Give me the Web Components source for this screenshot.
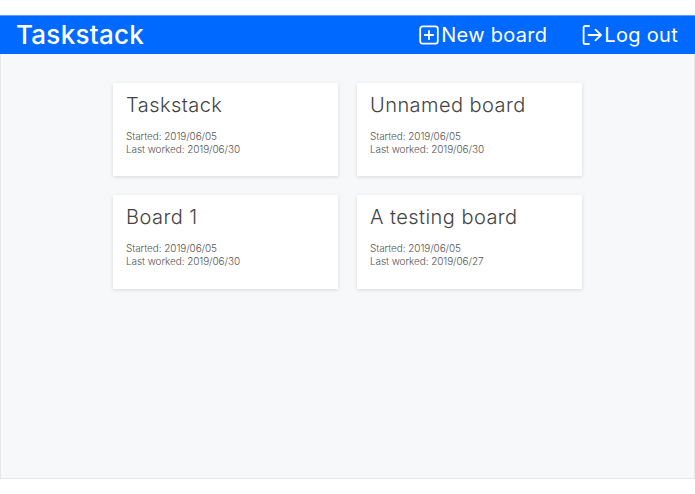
<!DOCTYPE html>
<html><head><meta charset="utf-8"><style>
html,body{margin:0;padding:0;background:#fff}
body{font-family:Inter,"Liberation Sans",sans-serif}
</style></head><body>
<app-frame>
<app-header slot="header"></app-header>
<board-grid>
<board-card name="Taskstack" started="2019/06/05" worked="2019/06/30"></board-card>
<board-card name="Unnamed board" started="2019/06/05" worked="2019/06/30"></board-card>
<board-card name="Board 1" started="2019/06/05" worked="2019/06/30"></board-card>
<board-card name="A testing board" started="2019/06/05" worked="2019/06/27"></board-card>
</board-grid>
</app-frame>
<script>
function def(name,html,init){customElements.define(name,class extends HTMLElement{
 constructor(){super();this.attachShadow({mode:'open'}).innerHTML=html;}
 connectedCallback(){if(init)init(this);}
});}
def('app-frame',`<style>
:host{display:flex;flex-direction:column;box-sizing:border-box;height:479px;padding-top:15px}
main{flex:1;background:#f6f8fa;border:1px solid #e6e8ea;border-top:0;box-sizing:border-box;padding-top:29px}
</style><slot name="header"></slot><main><slot></slot></main>`);
def('app-header',`<style>
:host{display:flex;align-items:center;justify-content:space-between;height:39px;background:#0069ff;color:#fff;padding:0 17px 0 16px;box-sizing:border-box;border-top:1px solid #5a9dff}
h1{margin:0;font:500 26px/1 Inter,sans-serif;letter-spacing:.27px}
nav{display:flex;gap:35px}
a{display:flex;align-items:center;gap:2px;font:400 20px/1 Inter,sans-serif;letter-spacing:.3px}
svg{width:20px;height:20px;fill:none;stroke:#fff;stroke-width:1.8;stroke-linecap:round;stroke-linejoin:round}
</style><h1>Taskstack</h1><nav>
<a><svg viewBox="0 0 20 20"><rect x="1.2" y="1.4" width="17.6" height="17.2" rx="2.4"/><path d="M10 5.8v8.4M5.8 10h8.4"/></svg>New board</a>
<a><svg viewBox="0 0 20 20"><path d="M7 1H3.2a1.6 1.6 0 0 0-1.6 1.6v14.8A1.6 1.6 0 0 0 3.2 19H7M6.5 10h12.5M13.5 4.7l5.5 5.3-5.5 5.3"/></svg>Log out</a>
</nav>`);
def('board-grid',`<style>
:host{display:grid;grid-template-columns:225px 225px;grid-template-rows:93px 94px;gap:19px;justify-content:start;margin-left:112px}
</style><slot></slot>`);
def('board-card',`<style>
:host{display:block;background:#fff;box-shadow:0 1px 4px rgba(0,0,0,.13);padding:10px 13px;box-sizing:border-box}
h2{margin:0 0 13px;font:300 20px/24px Inter,sans-serif;color:#444;letter-spacing:.45px}
p{margin:0;font:300 10px/13px Inter,sans-serif;color:#555;letter-spacing:-.08px}
</style><h2></h2><p></p><p></p>`,el=>{
 const s=el.shadowRoot;
 s.querySelector('h2').textContent=el.getAttribute('name');
 const p=s.querySelectorAll('p');
 p[0].textContent='Started: '+el.getAttribute('started');
 p[1].textContent='Last worked: '+el.getAttribute('worked');
});
</script>
</body></html>
